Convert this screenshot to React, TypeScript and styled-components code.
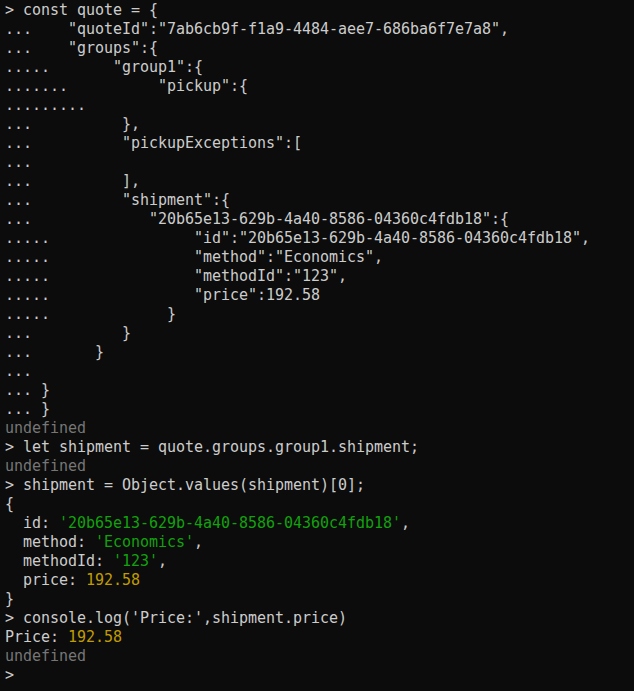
import React from "react";
import styled, { createGlobalStyle } from "styled-components";

const Global = createGlobalStyle`
  html, body { margin: 0; padding: 0; background: #0c0c0c; }
`;

const Terminal = styled.div`
  background: #0c0c0c;
  width: 634px;
  height: 691px;
  overflow: hidden;
  box-sizing: border-box;
  padding: 1px 0 0 5px;
  font-family: "DejaVu Sans Mono", "Liberation Mono", monospace;
  font-size: 15px;
  letter-spacing: -0.03px;
  color: #cccccc;
`;

const Line = styled.div`
  height: 19px;
  line-height: 19px;
  white-space: pre;
`;

type Tone = "gray" | "green" | "yellow";
const toneColor: Record<Tone, string> = {
  gray: "#767676",
  green: "#13a10e",
  yellow: "#c19c00",
};

const Tok = styled.span<{ $tone: Tone }>`
  color: ${(p) => toneColor[p.$tone]};
`;

const input: string[] = [
  '> const quote = {',
  '...    "quoteId":"7ab6cb9f-f1a9-4484-aee7-686ba6f7e7a8",',
  '...    "groups":{',
  '.....       "group1":{',
  '.......          "pickup":{',
  '.........',
  '...          },',
  '...          "pickupExceptions":[',
  '...',
  '...          ],',
  '...          "shipment":{',
  '...             "20b65e13-629b-4a40-8586-04360c4fdb18":{',
  '.....                "id":"20b65e13-629b-4a40-8586-04360c4fdb18",',
  '.....                "method":"Economics",',
  '.....                "methodId":"123",',
  '.....                "price":192.58',
  '.....             }',
  '...          }',
  '...       }',
  '...',
  '... }',
  '... }',
];

export default function App() {
  return (
    <>
      <Global />
      <Terminal>
        {input.map((l, i) => (
          <Line key={i}>{l}</Line>
        ))}
        <Line><Tok $tone="gray">undefined</Tok></Line>
        <Line>{'> let shipment = quote.groups.group1.shipment;'}</Line>
        <Line><Tok $tone="gray">undefined</Tok></Line>
        <Line>{'> shipment = Object.values(shipment)[0];'}</Line>
        <Line>{'{'}</Line>
        <Line>{'  id: '}<Tok $tone="green">'20b65e13-629b-4a40-8586-04360c4fdb18'</Tok>,</Line>
        <Line>{'  method: '}<Tok $tone="green">'Economics'</Tok>,</Line>
        <Line>{'  methodId: '}<Tok $tone="green">'123'</Tok>,</Line>
        <Line>{'  price: '}<Tok $tone="yellow">192.58</Tok></Line>
        <Line>{'}'}</Line>
        <Line>{"> console.log('Price:',shipment.price)"}</Line>
        <Line>{'Price: '}<Tok $tone="yellow">192.58</Tok></Line>
        <Line><Tok $tone="gray">undefined</Tok></Line>
        <Line>{'> '}</Line>
      </Terminal>
    </>
  );
}
